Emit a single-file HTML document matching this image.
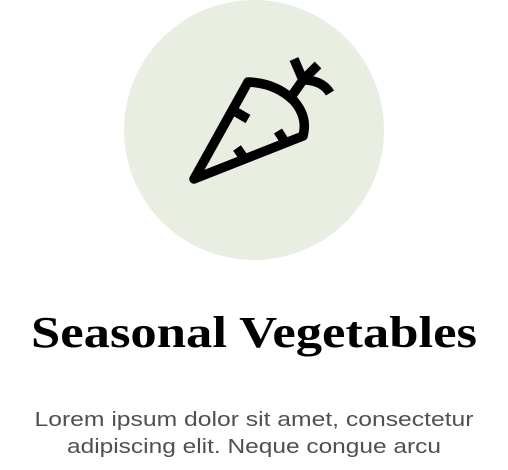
<!DOCTYPE html>
<html><head><style>
html,body{margin:0;padding:0;background:#fff;width:508px;height:470px;overflow:hidden}
</style></head><body>
<svg width="508" height="470" viewBox="0 0 508 470" xmlns="http://www.w3.org/2000/svg">
<circle cx="254" cy="130" r="130" fill="#e9eee3"/>
<g fill="none" stroke="#000" stroke-width="9.5" stroke-linecap="butt" stroke-linejoin="round">
<path d="M194,179 L248,82 Q276,83 294,101 Q308,117 303,136 Z"/>
<path d="M236,112 L248,119"/>
<path d="M285,142 L278,131"/>
<path d="M244,158 L237,148"/>
<path d="M291,97 L303,80 L294,59"/>
<path d="M303,80 L318,65"/>
<path d="M303,80 Q322,80 330,93"/>
</g>
<text x="254" y="347" text-anchor="middle" font-family="Liberation Serif, serif" font-weight="bold" font-size="44" textLength="446" lengthAdjust="spacingAndGlyphs" fill="#000">Seasonal Vegetables</text>
<text x="254" y="426" text-anchor="middle" font-family="Liberation Sans, sans-serif" font-size="20" textLength="439" lengthAdjust="spacingAndGlyphs" fill="#505050">Lorem ipsum dolor sit amet, consectetur</text>
<text x="254" y="453" text-anchor="middle" font-family="Liberation Sans, sans-serif" font-size="20" textLength="374" lengthAdjust="spacingAndGlyphs" fill="#505050">adipiscing elit. Neque congue arcu</text>
</svg>
</body></html>
